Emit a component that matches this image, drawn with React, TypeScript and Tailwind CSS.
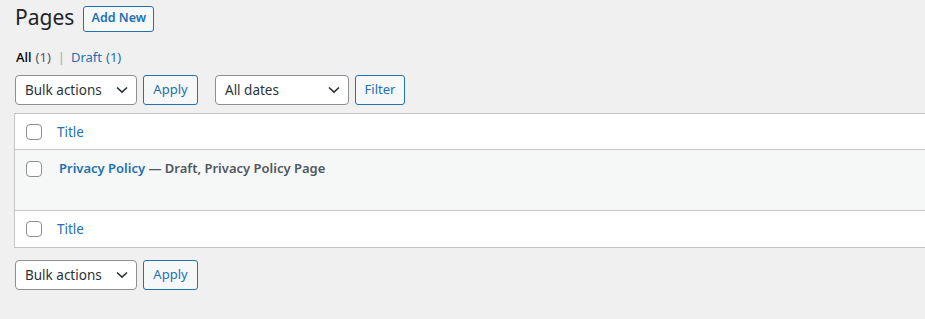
import React from "react";

function Chevron() {
  return (
    <svg width="12" height="8" viewBox="0 0 12 8" className="block">
      <path d="M1 1.5 L6 6.2 L11 1.5" fill="none" stroke="#2c3338" strokeWidth="1.6" />
    </svg>
  );
}

function Select({ label, width }: { label: string; width: string }) {
  return (
    <div
      className={`${width} h-[30px] border border-[#8c8f94] rounded-[4px] bg-white flex items-center justify-between pl-[9px] pr-[8px] text-[13.5px] text-[#2c3338]`}
    >
      <span>{label}</span>
      <Chevron />
    </div>
  );
}

function Btn({ label, width }: { label: string; width: string }) {
  return (
    <div
      className={`${width} h-[30px] border border-[#2271b1] rounded-[3px] bg-[#f6f7f7] flex items-center justify-center text-[13px] text-[#2271b1]`}
    >
      {label}
    </div>
  );
}

function Checkbox() {
  return <div className="w-[16px] h-[16px] border border-[#8c8f94] rounded-[4px] bg-white shrink-0" />;
}

export default function App() {
  return (
    <div className="bg-[#f0f0f1] h-[319px] w-full overflow-hidden font-['Segoe_UI','Noto_Sans',sans-serif] text-[#3c434a]">
      <div className="pl-[14px]">
        <div className="h-[37px] flex items-center pl-[1px]">
          <h1 className="text-[21px] leading-[1.3] font-normal text-[#1d2327] pb-[1px]">Pages</h1>
          <div className="ml-[9px] h-[26px] w-[71px] justify-center border border-[#2271b1] rounded-[3px] bg-[#f6f7f7] flex items-center text-[12.5px] font-semibold text-[#2271b1]">
            Add New
          </div>
        </div>
        <div className="mt-[11px] h-[20px] flex items-center text-[13px] pl-[2px]">
          <span className="text-black font-medium">All</span>
          <span className="ml-[4px] text-[#50575e]">(1)</span>
          <span className="ml-[7px] mr-[6px] text-[#a7aaad]">|</span>
          <span className="text-[#2271b1]">Draft</span>
          <span className="ml-[4px] text-[#2271b1]">(1)</span>
        </div>
        <div className="mt-[7px] flex items-center pl-[1px]">
          <Select label="Bulk actions" width="w-[122px]" />
          <div className="ml-[6px]">
            <Btn label="Apply" width="w-[55px]" />
          </div>
          <div className="ml-[17px]">
            <Select label="All dates" width="w-[134px]" />
          </div>
          <div className="ml-[6px]">
            <Btn label="Filter" width="w-[50px]" />
          </div>
        </div>
        <div className="mt-[8px] border-l border-t border-b border-[#c3c4c7] bg-white">
          <div className="h-[36px] flex items-center pl-[11px] border-b border-[#c3c4c7]">
            <Checkbox />
            <span className="ml-[15px] text-[13.5px] text-[#2271b1] pt-[1px]">Title</span>
          </div>
          <div className="h-[61px] bg-[#f6f7f7] flex items-start pl-[11px] pt-[11px] border-b border-[#c3c4c7]">
            <Checkbox />
            <span className="ml-[17px] -mt-[2px] text-[13px] font-semibold">
              <span className="text-[#2271b1]">Privacy Policy</span>
              <span className="text-[#50575e]"> — Draft, Privacy Policy Page</span>
            </span>
          </div>
          <div className="h-[36px] flex items-center pl-[11px]">
            <Checkbox />
            <span className="ml-[15px] text-[13.5px] text-[#2271b1]">Title</span>
          </div>
        </div>
        <div className="mt-[12px] flex items-center pl-[1px]">
          <Select label="Bulk actions" width="w-[122px]" />
          <div className="ml-[6px]">
            <Btn label="Apply" width="w-[55px]" />
          </div>
        </div>
      </div>
    </div>
  );
}
